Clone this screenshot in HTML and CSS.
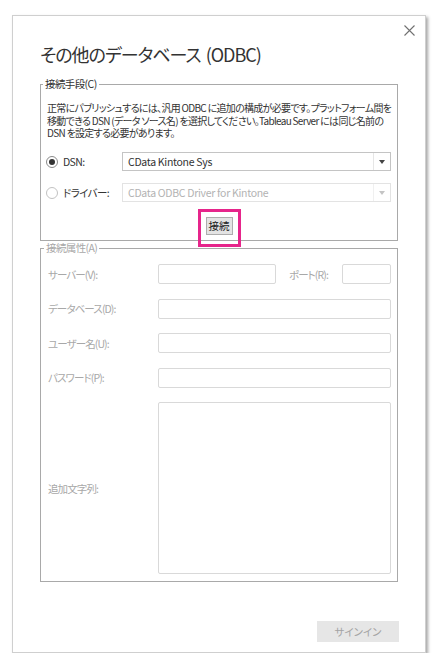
FILE: index.html
```html
<!DOCTYPE html>
<html lang="ja">
<head>
    <meta charset="UTF-8">
    <meta name="viewport" content="width=device-width, initial-scale=1.0">
    <title>その他のデータベース (ODBC)</title>
    <link rel="stylesheet" href="styles.css">
</head>
<body>
    <div class="dialog">
        <div class="dialog-head">
            <h1 class="title">その他のデータベース (ODBC)</h1>
            <button class="close" aria-label="閉じる">
                <svg width="11" height="11" viewBox="0 0 11 11"><path d="M0.5 0.5L10.5 10.5M10.5 0.5L0.5 10.5" stroke="#707070" stroke-width="1.1" fill="none"/></svg>
            </button>
        </div>

        <fieldset class="group">
            <legend>接続手段(C)</legend>
            <p class="note">正常にパブリッシュするには、汎用 ODBC に追加の構成が必要です。プラットフォーム間を<br>移動できる DSN (データ ソース名) を選択してください。Tableau Server には同じ名前の<br>DSN を設定する必要があります。</p>

            <div class="choice-grid">
                <label class="radio"><span class="dot checked"></span>DSN:</label>
                <div class="combo">
                    <span class="value">CData Kintone Sys</span>
                    <span class="drop"></span>
                </div>

                <label class="radio"><span class="dot"></span>ドライバー:</label>
                <div class="combo off">
                    <span class="value">CData ODBC Driver for Kintone</span>
                    <span class="drop"></span>
                </div>
            </div>

            <div class="connect-row">
                <button class="connect">接続<span class="mark"></span></button>
            </div>
        </fieldset>

        <fieldset class="group props">
            <legend>接続属性(A)</legend>
            <div class="prop-grid">
                <label for="server">サーバー(V):</label>
                <div class="server-row">
                    <input class="field server" id="server" disabled>
                    <label class="port-label" for="port">ポート(R):</label>
                    <input class="field port" id="port" disabled>
                </div>

                <label for="db">データベース(D):</label>
                <input class="field" id="db" disabled>

                <label for="user">ユーザー名(U):</label>
                <input class="field" id="user" disabled>

                <label for="pass">パスワード(P):</label>
                <input class="field" id="pass" type="password" disabled>

                <label for="extra">追加文字列:</label>
                <textarea class="field extra" id="extra" disabled></textarea>
            </div>
        </fieldset>

        <div class="dialog-foot">
            <button class="signin" disabled>サインイン</button>
        </div>
    </div>
</body>
</html>
```

FILE: styles.css
```css
* {
    box-sizing: border-box;
}
body {
    margin: 0;
    background: #fff;
    font-family: "Noto Sans CJK JP", sans-serif;
    font-size: 10.5px;
    letter-spacing: -0.6px;
    font-feature-settings: "palt";
    color: #333;
}
.dialog {
    margin: 15px 0 0 12px;
    width: 414px;
    height: 638px;
    border: 1px solid #cfcfcf;
    box-shadow: 2px 2px 3px rgba(0, 0, 0, 0.35);
    padding: 0 27px;
    display: flex;
    flex-direction: column;
    background: #fff;
}
.dialog-head {
    display: flex;
    justify-content: space-between;
    align-items: flex-start;
}
.title {
    margin: 25px 0 0;
    font-size: 18px;
    font-weight: normal;
    line-height: 26px;
    letter-spacing: -1px;
    word-spacing: 2px;
    color: #333;
}
.close {
    margin: 9px -17px 0 0;
    padding: 0;
    width: 11px;
    height: 11px;
    border: none;
    background: none;
    display: block;
}
.close svg {
    display: block;
}

/* group boxes */
.group {
    margin: 10px 0 0;
    min-width: 0;
    border: 1px solid #a9a9a9;
    padding: 11px 6px 5px;
}
.group legend {
    padding: 0 2px;
    margin-left: -4px;
    line-height: 14px;
}
.note {
    margin: 0;
    line-height: 12.5px;
    font-size: 10px;
    letter-spacing: -0.7px;
    white-space: nowrap;
}
.choice-grid {
    display: grid;
    grid-template-columns: 75px minmax(0, 1fr);
    row-gap: 12px;
    margin-top: 12.5px;
}
.radio {
    display: flex;
    align-items: center;
    gap: 5px;
    height: 19px;
}
.dot {
    width: 12px;
    height: 12px;
    margin-left: -1px;
    border-radius: 50%;
    border: 1px solid #8a8a8a;
    display: flex;
    align-items: center;
    justify-content: center;
}
.dot:not(.checked) {
    border-color: #c2c2c2;
}
.dot.checked::after {
    content: "";
    width: 6px;
    height: 6px;
    border-radius: 50%;
    background: #333;
}
.combo {
    height: 19px;
    border: 1px solid #c4c4c4;
    display: flex;
    align-items: center;
    background: #fff;
    letter-spacing: -0.3px;
}
.combo .value {
    flex: 1;
    padding-left: 5px;
}
.combo .drop {
    width: 17px;
    align-self: stretch;
    border-left: 1px solid #e6e6e6;
    display: flex;
    align-items: center;
    justify-content: center;
}
.combo .drop::before {
    content: "";
    border-left: 3.5px solid transparent;
    border-right: 3.5px solid transparent;
    border-top: 4px solid #444;
}
.combo.off {
    border-color: #e3e3e3;
    color: #b3b3b3;
}
.combo.off .drop {
    border-left-color: #f0f0f0;
}
.combo.off .drop::before {
    border-top-color: #c4c4c4;
}
.connect-row {
    display: flex;
    justify-content: center;
    margin-top: 15px;
}
.connect {
    position: relative;
    width: 27px;
    height: 18px;
    padding: 0;
    border: 1px solid #adadad;
    background: #e3e3e3;
    font: inherit;
    line-height: 16px;
    color: #222;
}
.connect .mark {
    position: absolute;
    left: -9px;
    right: -9px;
    top: -9px;
    bottom: -13px;
    border: 3px solid #e6258b;
}

/* connection properties, disabled */
.props {
    margin-top: 0;
    padding: 9px 6px 7px 7px;
    color: #a8a8a8;
}
.prop-grid {
    display: grid;
    grid-template-columns: 110px minmax(0, 1fr);
    row-gap: 14.5px;
    align-items: center;
}
.prop-grid label {
    letter-spacing: -0.9px;
}
.field {
    display: block;
    width: 100%;
    min-width: 0;
    height: 20px;
    margin: 0;
    border: 1px solid #d9d9d9;
    border-radius: 2px;
    background: #fff;
}
.server-row {
    display: flex;
    align-items: center;
    min-width: 0;
}
.field.server {
    flex: none;
    width: 118px;
}
.port-label {
    flex: none;
    width: 53px;
    margin-left: 13px;
}
.field.port {
    flex: 1;
    width: auto;
}
.field.extra {
    height: 172px;
    resize: none;
}
.dialog-foot {
    margin: 39px -1px 0 0;
    display: flex;
    justify-content: flex-end;
}
.signin {
    width: 82px;
    height: 21px;
    border: none;
    background: #e6e6e6;
    font: inherit;
    color: #a3a3a3;
}
```
